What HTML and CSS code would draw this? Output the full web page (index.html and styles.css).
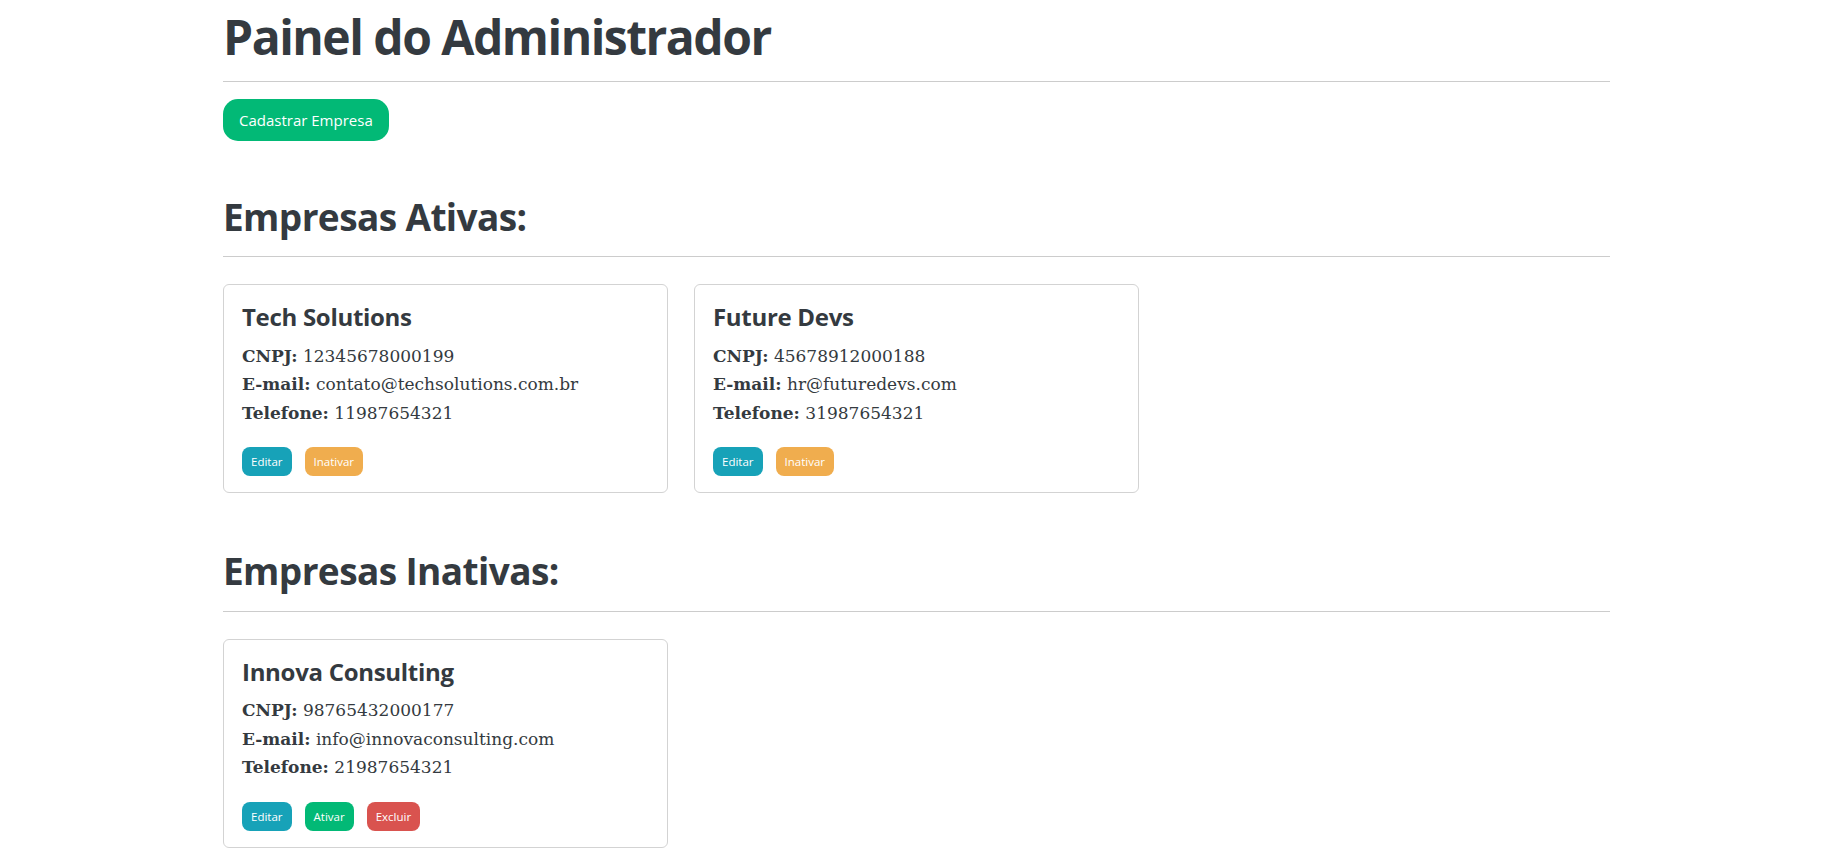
FILE: index.html
```html
<!DOCTYPE html>
<html lang="pt-BR">
<head>
<meta charset="utf-8">
<title>Painel do Administrador</title>
<link rel="stylesheet" href="styles.css">
</head>
<body>
<div class="container">
  <h1 class="page-title">Painel do Administrador</h1>
  <hr class="rule">
  <button class="btn btn-main">Cadastrar Empresa</button>

  <section class="section">
    <h2 class="section-title">Empresas Ativas:</h2>
    <hr class="rule">
    <div class="cards">
      <div class="card">
        <h3 class="card-title">Tech Solutions</h3>
        <p class="info"><strong>CNPJ:</strong> 12345678000199</p>
        <p class="info"><strong>E-mail:</strong> contato@techsolutions.com.br</p>
        <p class="info"><strong>Telefone:</strong> 11987654321</p>
        <div class="actions">
          <button class="btn btn-sm btn-info">Editar</button>
          <button class="btn btn-sm btn-warn">Inativar</button>
        </div>
      </div>
      <div class="card">
        <h3 class="card-title">Future Devs</h3>
        <p class="info"><strong>CNPJ:</strong> 45678912000188</p>
        <p class="info"><strong>E-mail:</strong> hr@futuredevs.com</p>
        <p class="info"><strong>Telefone:</strong> 31987654321</p>
        <div class="actions">
          <button class="btn btn-sm btn-info">Editar</button>
          <button class="btn btn-sm btn-warn">Inativar</button>
        </div>
      </div>
    </div>
  </section>

  <section class="section">
    <h2 class="section-title">Empresas Inativas:</h2>
    <hr class="rule">
    <div class="cards">
      <div class="card">
        <h3 class="card-title">Innova Consulting</h3>
        <p class="info"><strong>CNPJ:</strong> 98765432000177</p>
        <p class="info"><strong>E-mail:</strong> info@innovaconsulting.com</p>
        <p class="info"><strong>Telefone:</strong> 21987654321</p>
        <div class="actions">
          <button class="btn btn-sm btn-info">Editar</button>
          <button class="btn btn-sm btn-success">Ativar</button>
          <button class="btn btn-sm btn-danger">Excluir</button>
        </div>
      </div>
    </div>
  </section>
</div>
</body>
</html>
```

FILE: styles.css
```css
* { box-sizing: border-box; }

body {
  margin: 0;
  background: #ffffff;
  color: #343a40;
  font-family: "DejaVu Serif", Georgia, serif;
}

.container {
  width: 1387px;
  margin-left: 223px;
}

.page-title {
  font-family: "Open Sans", "Noto Sans", sans-serif;
  font-weight: 700;
  font-size: 48px;
  line-height: 1.2;
  margin: 8px 0 0;
  letter-spacing: -1.5px;
}

.rule {
  border: 0;
  border-top: 1px solid #cccccc;
  margin: 15px 0 17px;
}

.btn {
  font-family: "Open Sans", "Noto Sans", sans-serif;
  border: 0;
  color: #ffffff;
  cursor: pointer;
}

.btn-main {
  background: #02b976;
  height: 42px;
  padding: 0 16px;
  font-size: 15px;
  border-radius: 15px;
}

.section { margin-top: 54px; }
.section + .section { margin-top: 56px; }

.section-title {
  font-family: "Open Sans", "Noto Sans", sans-serif;
  font-weight: 700;
  font-size: 37px;
  line-height: 1.2;
  margin: 0;
  letter-spacing: -0.6px;
}

.section .rule { margin: 17px 0 27px; }

.cards {
  display: flex;
  flex-wrap: wrap;
  gap: 26px;
}

.card {
  width: 445px;
  border: 1px solid #d3d3d3;
  border-radius: 6px;
  padding: 18px 18px 16px;
}

.card-title {
  font-family: "Open Sans", "Noto Sans", sans-serif;
  font-weight: 700;
  font-size: 24px;
  line-height: 1.2;
  margin: 0 0 10px;
  letter-spacing: -0.3px;
}

.info {
  margin: 0;
  font-size: 17px;
  line-height: 28.5px;
}

.info strong { font-weight: 700; }

.actions {
  display: flex;
  gap: 13px;
  margin-top: 20px;
}

.btn-sm {
  height: 29px;
  padding: 0 9px;
  font-size: 11.5px;
  border-radius: 8px;
}

.btn-info { background: #17a2b8; }
.btn-warn { background: #f0ad4e; }
.btn-success { background: #02b976; }
.btn-danger { background: #d9534f; }
```
